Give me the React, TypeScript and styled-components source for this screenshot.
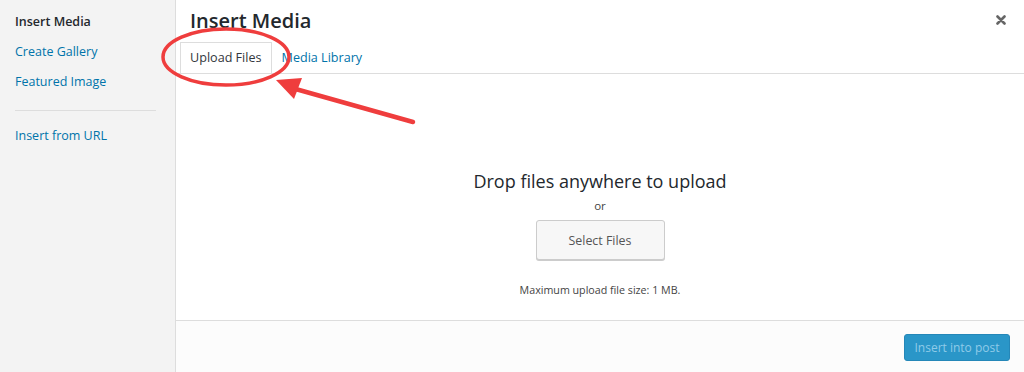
import React from "react";
import styled, { createGlobalStyle } from "styled-components";

const GlobalStyle = createGlobalStyle`
  html, body {
    margin: 0;
    padding: 0;
    overflow: hidden;
  }
  body {
    font-family: "Open Sans", "Liberation Sans", sans-serif;
    background: #fff;
  }
`;

const Frame = styled.div`
  position: relative;
  display: flex;
  width: 1024px;
  height: 372px;
`;

const Sidebar = styled.div`
  width: 176px;
  flex-shrink: 0;
  background: #f3f3f3;
  border-right: 1px solid #dddddd;
  padding-top: 7px;
  box-sizing: border-box;
`;

interface MenuItemProps {
  active?: boolean;
}
const MenuItem = styled.div<MenuItemProps>`
  padding: 6px 15px;
  font-size: 12.5px;
  line-height: 18px;
  color: ${(props) => (props.active ? "#23282d" : "#0073aa")};
  font-weight: ${(props) => (props.active ? 600 : 400)};
`;

const Separator = styled.div`
  height: 1px;
  background: #dddddd;
  margin: 13px 19px 10px 15px;
`;

const Main = styled.div`
  flex: 1;
  display: flex;
  flex-direction: column;
  min-width: 0;
`;

const Header = styled.div`
  border-bottom: 1px solid #dddddd;
`;

const TitleRow = styled.div`
  display: flex;
  justify-content: space-between;
  align-items: center;
  height: 42px;
  padding: 0 18px 0 14px;
`;

const Title = styled.h1`
  margin: 0;
  font-size: 20px;
  font-weight: 600;
  color: #23282d;
  line-height: 42px;
`;

const Close = styled.div`
  display: flex;
  align-items: center;
  margin-top: -2px;
`;

const Tabs = styled.div`
  display: flex;
  padding-left: 4px;
  height: 31px;
`;

interface TabProps {
  active?: boolean;
}
const Tab = styled.div<TabProps>`
  padding: 0 9px;
  font-size: 12.6px;
  line-height: 30px;
  color: ${(props) => (props.active ? "#32373c" : "#0073aa")};
  background: #fff;
  border: 1px solid ${(props) => (props.active ? "#dddddd" : "transparent")};
  border-bottom: none;
  margin-bottom: -1px;
  height: 31px;
  box-sizing: border-box;
`;

const UploadArea = styled.div`
  flex: 1;
  display: flex;
  flex-direction: column;
  align-items: center;
  padding-top: 95px;
  background: #fff;
`;

const DropText = styled.div`
  font-size: 18px;
  line-height: 24px;
  color: #23282d;
`;

const OrText = styled.div`
  margin-top: 4px;
  font-size: 11.5px;
  line-height: 18px;
  color: #444;
`;

const SelectButton = styled.div`
  margin-top: 5px;
  width: 129px;
  height: 40px;
  box-sizing: border-box;
  display: flex;
  align-items: center;
  justify-content: center;
  background: #f7f7f7;
  border: 1px solid #cccccc;
  border-radius: 3px;
  box-shadow: 0 1px 0 #cccccc;
  font-size: 12.4px;
  color: #555;
`;

const MaxSize = styled.div`
  margin-top: 21px;
  font-size: 10.7px;
  line-height: 18px;
  color: #444;
`;

const Footer = styled.div`
  height: 52px;
  box-sizing: border-box;
  border-top: 1px solid #dddddd;
  background: #fcfcfc;
  display: flex;
  justify-content: flex-end;
  align-items: center;
  padding: 0 14px 0 0;
`;

const InsertButton = styled.div`
  height: 27px;
  width: 106px;
  box-sizing: border-box;
  display: flex;
  align-items: center;
  justify-content: center;
  background: #2a96c8;
  border: 1px solid #2587b8;
  border-radius: 3px;
  font-size: 12px;
  color: #8fcbe8;
  margin-top: 2px;
`;

const Annotation = styled.svg`
  position: absolute;
  left: 0;
  top: 0;
  pointer-events: none;
`;

const App = () => {
  return (
    <>
      <GlobalStyle />
      <Frame>
        <Sidebar>
          <MenuItem active>Insert Media</MenuItem>
          <MenuItem>Create Gallery</MenuItem>
          <MenuItem>Featured Image</MenuItem>
          <Separator />
          <MenuItem>Insert from URL</MenuItem>
        </Sidebar>
        <Main>
          <Header>
            <TitleRow>
              <Title>Insert Media</Title>
              <Close>
                <svg width="10" height="10" viewBox="0 0 10 10">
                  <path
                    d="M1.5 1.5 L8.5 8.5 M8.5 1.5 L1.5 8.5"
                    stroke="#666"
                    strokeWidth="2.6"
                    strokeLinecap="round"
                  />
                </svg>
              </Close>
            </TitleRow>
            <Tabs>
              <Tab active>Upload Files</Tab>
              <Tab>Media Library</Tab>
            </Tabs>
          </Header>
          <UploadArea>
            <DropText>Drop files anywhere to upload</DropText>
            <OrText>or</OrText>
            <SelectButton>Select Files</SelectButton>
            <MaxSize>Maximum upload file size: 1 MB.</MaxSize>
          </UploadArea>
          <Footer>
            <InsertButton>Insert into post</InsertButton>
          </Footer>
        </Main>
        <Annotation width="1024" height="372" viewBox="0 0 1024 372">
          <ellipse
            cx="226"
            cy="57"
            rx="63"
            ry="28"
            fill="none"
            stroke="#ef3d3d"
            strokeWidth="3.5"
          />
          <line
            x1="413"
            y1="122"
            x2="292"
            y2="88"
            stroke="#ef3d3d"
            strokeWidth="4.5"
            strokeLinecap="round"
          />
          <polygon points="276,80 302,78 294,99" fill="#ef3d3d" />
        </Annotation>
      </Frame>
    </>
  );
};

export default App;
